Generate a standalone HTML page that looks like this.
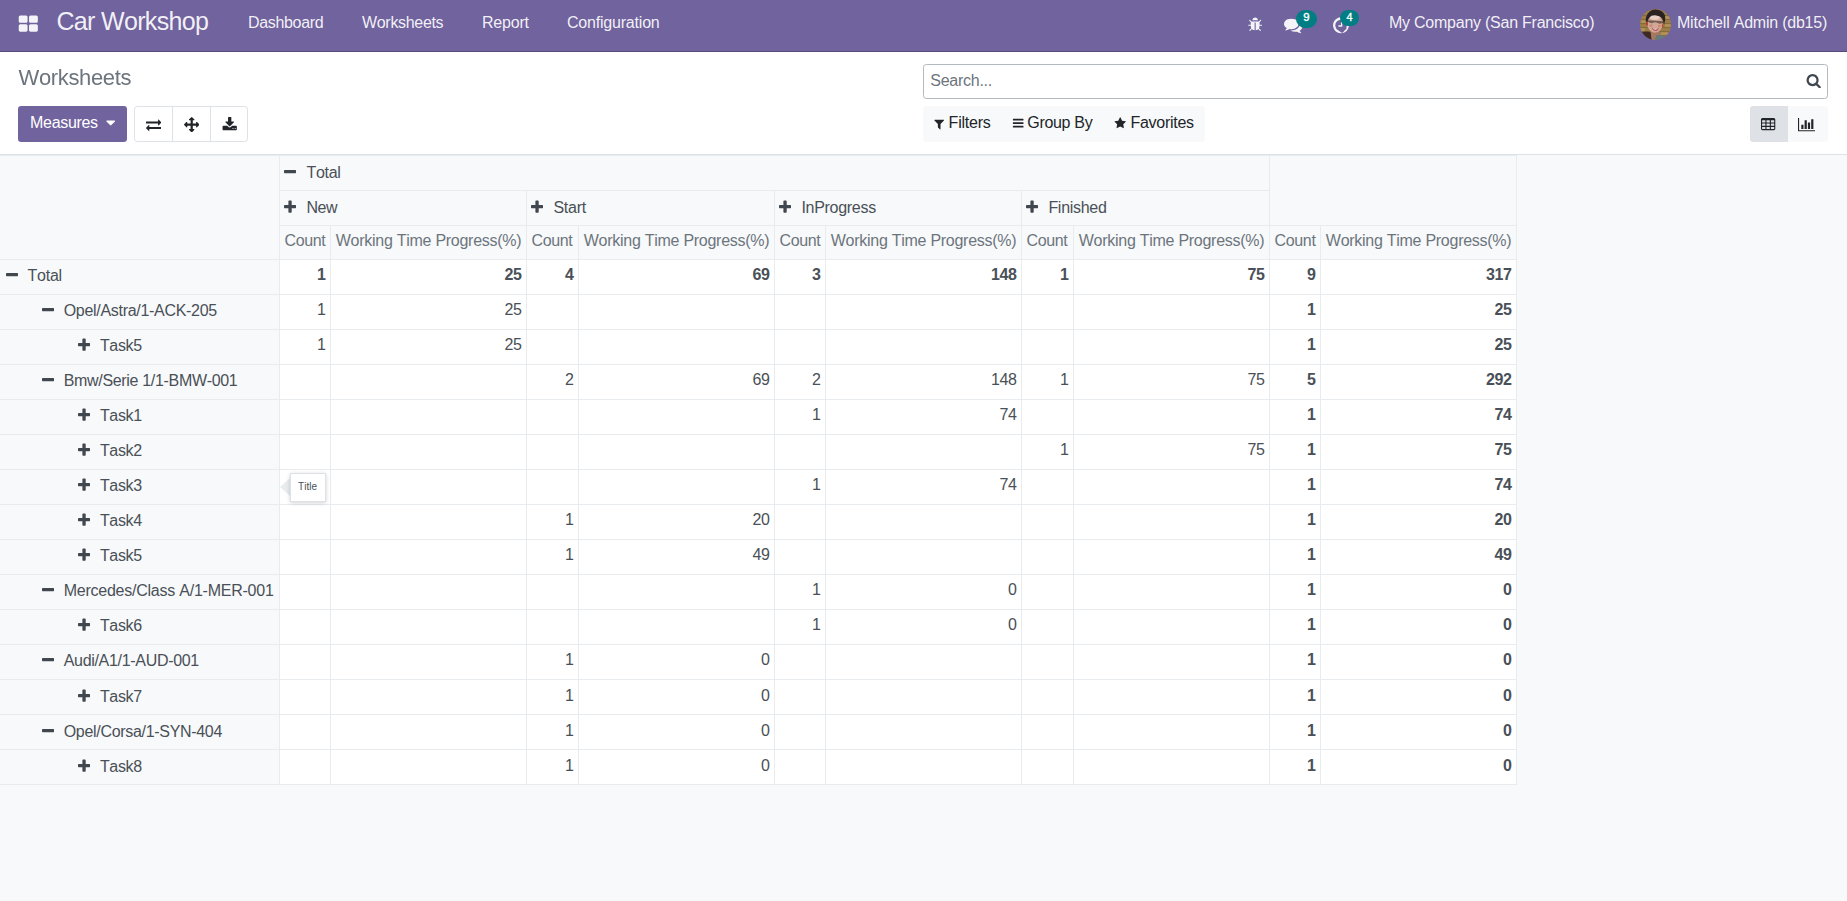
<!DOCTYPE html>
<html lang="en"><head><meta charset="utf-8"><title>Odoo - Worksheets</title>
<style>
html,body{margin:0;padding:0;}
body{font-kerning:none;width:1847px;height:901px;overflow:hidden;background:#f8f9fa;font-family:"Liberation Sans",sans-serif;font-size:15.4px;line-height:23.1px;color:#495057;position:relative;}
*{box-sizing:border-box;}
.tx{display:inline-block;vertical-align:top;white-space:nowrap;}
/* ---------- navbar ---------- */
.nav{position:absolute;left:0;top:0;width:1847px;height:52px;background:#71639e;border-bottom:1px solid #554a7b;color:#fff;}
.nav .t{position:absolute;white-space:nowrap;color:rgba(255,255,255,.92);font-size:15.4px;line-height:23.1px;top:11px;}
.nav .brand{position:absolute;left:56.4px;top:4px;font-size:23.76px;line-height:35.6px;color:rgba(255,255,255,.92);white-space:nowrap;}
.nav svg{position:absolute;}
.badge{position:absolute;background:#017e84;color:#fff;font-size:11.6px;line-height:1;font-weight:400;-webkit-text-stroke:0.35px #fff;border-radius:10px;text-align:center;}
/* ---------- control panel ---------- */
.cp{position:absolute;left:0;top:52px;width:1847px;height:103px;background:#fff;border-bottom:1px solid #dee2e6;}
.cp .title{position:absolute;left:18.6px;top:10px;font-size:21.1px;line-height:31.7px;color:#6c757d;white-space:nowrap;}
.cp svg{position:absolute;}
.btn-m{position:absolute;left:18px;top:54px;width:109px;height:36px;background:#71639e;border-radius:3.3px;color:#fff;font-size:15.4px;line-height:23.1px;padding:5.4px 0 0 12.1px;white-space:nowrap;}
.bg{position:absolute;left:134px;top:54px;width:114px;height:36px;border:1px solid #dee2e6;border-radius:3.3px;background:#fff;}
.bg i{position:absolute;top:0;width:1px;height:34px;background:#dee2e6;}
.search{position:absolute;left:923px;top:12px;width:905px;height:35px;border:1px solid #b4b9be;border-radius:3.3px;background:#fff;}
.search>span{position:absolute;left:6.3px;top:4.3px;color:#6c757d;font-size:15.4px;line-height:23.1px;}
.fg{position:absolute;left:923px;top:54px;width:282px;height:36px;background:#f8f9fa;border-radius:3.3px;}
.fg>span{position:absolute;top:5.4px;color:#212529;font-size:15.4px;line-height:23.1px;white-space:nowrap;}
.vs{position:absolute;left:1750px;top:54px;width:78px;height:36px;background:#f8f9fa;border-radius:3.3px;overflow:hidden;}
.vs .act{position:absolute;left:0;top:0;width:38px;height:36px;background:#dee2e6;}
/* ---------- pivot ---------- */
.content{position:absolute;left:0;top:155px;width:1847px;height:746px;background:#f8f9fa;}
table.pv{border-collapse:separate;border-spacing:0;table-layout:fixed;width:1517px;margin:0;border-top:1px solid #e9ecef;}
.pv col.cc{width:51.2px;}
.pv col.cw{width:196.2px;}
.pv th,.pv td{border-right:1px solid #e9ecef;border-bottom:1px solid #e9ecef;padding:3.2px 4.4px 0 4.4px;vertical-align:top;font-weight:400;text-align:left;white-space:nowrap;overflow:hidden;font-size:15.4px;line-height:23.1px;}
.pv tr{height:35.05px;}
.pv tr.h3{height:33.55px;}
.pv tr.h1{height:35px;}
.pv th{background:#f8f9fa;color:#495057;}
.pv th.ms{color:#6c757d;}
.pv td{background:#fff;text-align:right;color:#495057;padding-top:3.35px;}
.pv .pi{display:inline-block;vertical-align:top;margin:3px 9.9px 0 0;}
.pv th.rh .pi{margin-right:9.6px;}
.pv th.hd{padding-top:4.6px;}
.pv th.rh{padding-top:4.38px;padding-left:5.9px;}
.pv th.l1{padding-left:42px;}
.pv th.l2{padding-left:78.2px;}
/* ---------- tooltip ---------- */
.tip{position:absolute;left:280px;top:318px;}
.tip-arrow{position:absolute;left:0.4px;top:4.9px;width:0;height:0;border-top:9px solid transparent;border-bottom:9px solid transparent;border-right:10.3px solid #e9ecef;}
.tip-box{position:absolute;left:10px;top:0px;width:36px;height:28.6px;padding-right:1px;background:#fff;border:1px solid #dee2e6;box-shadow:0 1px 4px rgba(0,0,0,.18);font-size:10px;line-height:25.2px;text-align:center;color:#495057;}

</style></head>
<body>
<div class="nav">
<svg viewBox="0 0 1792 1792" width="20.60" height="20.60" style="left:17.5px;top:14.1px"><path fill="rgba(255,255,255,.92)" d="M832 1024v384q0 52-38 90t-90 38h-512q-52 0-90-38t-38-90v-384q0-52 38-90t90-38h512q52 0 90 38t38 90zM832 256v384q0 52-38 90t-90 38h-512q-52 0-90-38t-38-90v-384q0-52 38-90t90-38h512q52 0 90 38t38 90zM1728 1024v384q0 52-38 90t-90 38h-512q-52 0-90-38t-38-90v-384q0-52 38-90t90-38h512q52 0 90 38t38 90zM1728 256v384q0 52-38 90t-90 38h-512q-52 0-90-38t-38-90v-384q0-52 38-90t90-38h512q52 0 90 38t38 90z"/></svg>
<span class="brand"><span class="tx" style="font-size:25px;line-height:35.6px;letter-spacing:-0.660px;">Car Workshop</span></span>
<span class="t" style="left:248px"><span class="tx" style="font-size:16px;line-height:23.1px;letter-spacing:-0.326px;">Dashboard</span></span>
<span class="t" style="left:362px"><span class="tx" style="font-size:16px;line-height:23.1px;letter-spacing:-0.317px;">Worksheets</span></span>
<span class="t" style="left:482px"><span class="tx" style="font-size:16px;line-height:23.1px;letter-spacing:-0.200px;">Report</span></span>
<span class="t" style="left:567px"><span class="tx" style="font-size:16px;line-height:23.1px;letter-spacing:-0.201px;">Configuration</span></span>
<svg viewBox="0 0 1792 1792" width="15.40" height="15.40" style="left:1248.1px;top:17.0px"><path fill="rgba(255,255,255,.92)" d="M1632 960q0 26-19 45t-45 19h-224q0 171-67 290l208 209q19 19 19 45t-19 45q-18 19-45 19t-45-19l-198-197q-5 5-15 13t-42 28.500-65 36.500-82 29-97 13v-896h-128v896q-51 0-101.500-13.500t-87-33-66-39-43.500-32.500l-15-14-183 207q-20 21-48 21-24 0-43-16-19-18-20.500-44.500t15.500-46.500l202-227q-58-114-58-274h-224q-26 0-45-19t-19-45 19-45 45-19h224v-294l-173-173q-19-19-19-45t19-45 45-19 45 19l173 173h844l173-173q19-19 45-19t45 19 19 45-19 45l-173 173v294h224q26 0 45 19t19 45zM1152 384h-640q0-133 93.500-226.500t226.500-93.500 226.500 93.500 93.500 226.500z"/></svg>
<svg viewBox="0 0 1792 1792" width="18.48" height="18.48" style="left:1283.6px;top:15.8px"><path fill="rgba(255,255,255,.92)" d="M1408 768q0 139-94 257t-256.500 186.500-353.500 68.500q-86 0-176-16-124 88-278 128-36 9-86 16h-3q-11 0-20.500-8t-11.500-21q-1-3-1-6.500t0.500-6.500 2-6l2.500-5t3.500-5.500 4-5 4.500-5 4-4.500q5-6 23-25t26-29.500 22.500-29 25-38.500 20.500-44q-124-72-195-177t-71-224q0-139 94-257t256.500-186.500 353.500-68.500 353.500 68.500 256.500 186.500 94 257zM1792 1024q0 120-71 224.500t-195 176.500q10 24 20.500 44t25 38.500 22.500 29 26 29.500 23 25q1 1 4 4.500t4.500 5 4 5 3.500 5.500l2.500 5t2 6 0.500 6.500-1 6.500q-3 14-13 22t-22 7q-50-7-86-16-154-40-278-128-90 16-176 16-271 0-472-132 58 4 88 4 161 0 309-45t264-129q125-92 192-212t67-254q0-77-23-152 129 71 204 178t75 230z"/></svg>
<span class="badge" style="left:1296px;top:9.7px;width:21px;height:18.3px;padding-top:2.5px;font-size:11.4px">9</span>
<svg viewBox="0 0 1536 1792" width="15.94" height="18.60" style="left:1332.8px;top:16.0px"><path fill="rgba(255,255,255,.92)" d="M896 544v448q0 14-9 23t-23 9h-320q-14 0-23-9t-9-23v-64q0-14 9-23t23-9h224v-352q0-14 9-23t23-9h64q14 0 23 9t9 23zM1312 896q0-148-73-273t-198-198-273-73-273 73-198 198-73 273 73 273 198 198 273 198 273-73 198-198 73-273zM1536 896q0 209-103 385.500t-279.500 279.500-385.500 103-385.500-103-279.500-279.500-103-385.500 103-385.500 279.500-279.500 385.500-103 385.500 103 279.500 279.500 103 385.500z"/></svg>
<span class="badge" style="left:1340px;top:9.7px;width:19.2px;height:16.5px;padding-top:2.8px;font-size:10.8px">4</span>
<span class="t" style="left:1389px"><span class="tx" style="font-size:16px;line-height:23.1px;letter-spacing:-0.244px;">My Company (San Francisco)</span></span>
<svg viewBox="0 0 31 31" width="31.1" height="31.1" style="left:1639.9px;top:8.9px">
<defs><clipPath id="av"><circle cx="15.5" cy="15.5" r="15.5"/></clipPath><filter id="avb" x="-10%" y="-10%" width="120%" height="120%"><feGaussianBlur stdDeviation="0.55"/></filter></defs>
<g clip-path="url(#av)"><g filter="url(#avb)">
<rect x="-2" y="-2" width="35" height="35" fill="#9c7c47"/>
<g stroke="#7a6034" stroke-width="0.9" opacity=".75"><path d="M-1 6.5H32M-1 10.5H32M-1 14.5H32M-1 18.5H32M-1 22.5H32M-1 26.5H32"/></g>
<g fill="#b8985a" opacity=".8"><rect x="1" y="11.2" width="5" height="2.6"/><rect x="24.5" y="7.2" width="5" height="2.6"/><rect x="25" y="15.2" width="5.5" height="2.6"/><rect x="21" y="23.2" width="7" height="2.6"/><rect x="0" y="19.2" width="5" height="2.6"/></g>
<path d="M-1 32 L1.5 23.5 Q8 21 13 24.5 L15 32 Z" fill="#3d2a20"/>
<path d="M10.5 22 L11.5 31 L21 31 L19 21 Z" fill="#a8775f"/>
<path d="M14.5 31 L16.5 25.8 Q22 25 26.5 28.5 L27 33 L14 33 Z" fill="#66797b"/>
<ellipse cx="14.9" cy="14.4" rx="7.7" ry="9.3" fill="#d3a795"/>
<ellipse cx="6.9" cy="14.6" rx="1.1" ry="1.9" fill="#b5422f"/>
<ellipse cx="22.6" cy="16.6" rx="0.9" ry="1.6" fill="#b9513c"/>
<ellipse cx="14.8" cy="8" rx="5" ry="2.8" fill="#e9d6cf" opacity=".85"/>
<ellipse cx="11" cy="16.5" rx="1.6" ry="1.5" fill="#c9604f" opacity=".4"/>
<ellipse cx="19.3" cy="17" rx="1.5" ry="1.4" fill="#c9604f" opacity=".4"/>
<path d="M5.8 12.5 Q5.2 4 12.5 0.8 Q22 -0.8 25 6.5 Q25.8 11.5 24 15.5 L22.8 11 Q21 6.8 16 6.4 Q11 6 9.2 8.6 Q8 10.4 7.4 13.2 Z" fill="#2a2320"/>
<path d="M7.4 11.3 L23.6 12.3 L23.6 14 L19.5 14.6 L16.4 13.4 L14.6 13.3 L11.5 14.2 L7.4 12.8 Z" fill="#4b3a34" opacity=".7"/>
<path d="M11.6 18.6 Q15.3 19.6 18.8 18.9 Q18 22 15.2 22 Q12.6 21.7 11.6 18.6Z" fill="#b04f58"/>
<path d="M12.6 19.1 Q15.3 19.9 17.9 19.3 Q17.4 20.6 15.2 20.6 Q13.4 20.4 12.6 19.1Z" fill="#f4ece8"/>
</g></g></svg>
<span class="t" style="left:1677px"><span class="tx" style="font-size:16px;line-height:23.1px;letter-spacing:-0.221px;">Mitchell Admin (db15)</span></span>
</div>
<div class="cp">
<span class="title"><span class="tx" style="font-size:22px;line-height:31.7px;letter-spacing:-0.370px;transform:scaleY(1.04);transform-origin:0 23.47px;">Worksheets</span></span>
<div class="btn-m"><span class="tx" style="font-size:16px;line-height:23.1px;letter-spacing:-0.329px;">Measures</span><svg viewBox="0 0 1792 1792" width="15.40" height="15.40" style="left:85.3px;top:9.4px"><path fill="#fff" d="M1408 704q0 26-19 45l-448 448q-19 19-45 19t-45-19l-448-448q-19-19-19-45t19-45 45-19h896q26 0 45 19t19 45z"/></svg></div>
<div class="bg"><i style="left:37.3px"></i><i style="left:75.1px"></i>
<svg viewBox="0 0 1792 1792" width="15.40" height="15.40" style="left:10.8px;top:9.6px"><path fill="#212529" d="M1792 1184v192q0 13-9.500 22.500t-22.500 9.500h-1376v192q0 13-9.500 22.500t-22.500 9.500q-12 0-24-10l-319-320q-9-9-9-22 0-14 9-23l320-320q9-9 23-9 13 0 22.500 9.500t9.500 22.500v192h1376q13 0 22.500 9.500t9.500 22.500zM1792 640q0 14-9 23l-320 320q-9 9-23 9-13 0-22.500-9.500t-9.500-22.500v-192h-1376q-13 0-22.500-9.500t-9.500-22.500v-192q0-13 9.500-22.500t22.500-9.500h1376v-192q0-14 9-23t23-9q12 0 24 10l319 319q9 9 9 23z"/></svg>
<svg viewBox="0 0 1792 1792" width="15.40" height="15.40" style="left:48.6px;top:9.8px"><path fill="#212529" d="M1792 896q0 26-19 45l-256 256q-19 19-45 19t-45-19-19-45v-128h-384v384h128q26 0 45 19t19 45-19 45l-256 256q-19 19-45 19t-45-19l-256-256q-19-19-19-45t19-45 45-19h128v-384h-384v128q0 26-19 45t-45 19-45-19l-256-256q-19-19-19-45t19-45l256-256q19-19 45-19t45 19 19 45v128h384v-384h-128q-26 0-45-19t-19-45 19-45l256-256q19-19 45-19t45 19l256 256q19 19 19 45t-19 45-45 19h-128v384h384v-128q0-26 19-45t45-19 45 19l256 256q19 19 19 45z"/></svg>
<svg viewBox="0 0 1792 1792" width="15.40" height="15.40" style="left:86.5px;top:9.7px"><path fill="#212529" d="M1344 1344q0-26-19-45t-45-19-45 19-19 45 19 45 45 19 45-19 19-45zM1600 1344q0-26-19-45t-45-19-45 19-19 45 19 45 45 19 45-19 19-45zM1728 1120v320q0 40-28 68t-68 28h-1472q-40 0-68-28t-28-68v-320q0-40 28-68t68-28h465l135 136q58 56 136 56t136-56l136-136h464q40 0 68 28t28 68zM1403 551q17 41-14 70l-448 448q-18 19-45 19t-45-19l-448-448q-31-29-14-70 17-39 59-39h256v-448q0-26 19-45t45-19h256q26 0 45 19t19 45v448h256q42 0 59 39z"/></svg>
</div>
<div class="search"><span><span class="tx" style="font-size:16px;line-height:23.1px;letter-spacing:-0.267px;">Search...</span></span><svg viewBox="0 0 1792 1792" width="15.40" height="15.40" style="left:881.5px;top:7.6px"><path fill="#41474e" d="M1216 832q0-185-131.500-316.500t-316.500-131.500-316.500 131.500-131.500 316.500 131.500 316.500 316.500 131.500 316.500-131.500 131.500-316.500zM1728 1664q0 52-38 90t-90 38q-54 0-90-38l-343-342q-179 124-399 124-143 0-273.500-55.500t-225-150-150-225-55.500-273.500 55.500-273.500 150-225 225-150 273.500-55.500 273.500 55.500 225 150 150 225 55.500 273.500q0 220-124 399l343 343q37 37 37 90z"/></svg></div>
<div class="fg">
<svg viewBox="0 0 1792 1792" width="12.40" height="12.40" style="left:10.4px;top:11.5px"><path fill="#212529" d="M1595 295q17 41-14 70l-493 493v742q0 42-39 59-13 5-25 5-27 0-45-19l-256-256q-19-19-19-45v-486l-493-493q-31-29-14-70 17-39 59-39h1280q42 0 59 39z"/></svg><span style="left:25.6px"><span class="tx" style="font-size:16px;line-height:23.1px;letter-spacing:-0.233px;">Filters</span></span>
<svg viewBox="0 0 1792 1792" width="12.40" height="12.40" style="left:88.8px;top:11.1px"><path fill="#212529" d="M1664 1344v128q0 26-19 45t-45 19h-1408q-26 0-45-19t-19-45v-128q0-26 19-45t45-19h1408q26 0 45 19t19 45zM1664 832v128q0 26-19 45t-45 19h-1408q-26 0-45-19t-19-45v-128q0-26 19-45t45-19h1408q26 0 45 19t19 45zM1664 320v128q0 26-19 45t-45 19h-1408q-26 0-45-19t-19-45v-128q0-26 19-45t45-19h1408q26 0 45 19t19 45z"/></svg><span style="left:104.3px"><span class="tx" style="font-size:16px;line-height:23.1px;letter-spacing:-0.317px;">Group By</span></span>
<svg viewBox="0 0 1792 1792" width="12.40" height="12.40" style="left:191.3px;top:11.0px"><path fill="#212529" d="M1728 647q0 22-26 48l-363 354 86 500q1 7 1 20 0 21-10.500 35.500t-30.500 14.500q-19 0-40-12l-449-236-449 236q-22 12-40 12-21 0-31.500-14.500t-10.500-35.500q0-6 2-20l86-500-364-354q-25-27-25-48 0-37 56-46l502-73 225-455q19-41 49-41t49 41l225 455 502 73q56 9 56 46z"/></svg><span style="left:207.5px"><span class="tx" style="font-size:16px;line-height:23.1px;letter-spacing:-0.274px;">Favorites</span></span>
</div>
<div class="vs"><div class="act"></div>
<svg viewBox="0 0 1792 1792" width="15.40" height="15.40" style="left:11.2px;top:10.7px"><path fill="#212529" d="M512 1376v-192q0-14-9-23t-23-9h-320q-14 0-23 9t-9 23v192q0 14 9 23t23 9h320q14 0 23-9t9-23zM512 992v-192q0-14-9-23t-23-9h-320q-14 0-23 9t-9 23v192q0 14 9 23t23 9h320q14 0 23-9t9-23zM1024 1376v-192q0-14-9-23t-23-9h-320q-14 0-23 9t-9 23v192q0 14 9 23t23 9h320q14 0 23-9t9-23zM512 608v-192q0-14-9-23t-23-9h-320q-14 0-23 9t-9 23v192q0 14 9 23t23 9h320q14 0 23-9t9-23zM1024 992v-192q0-14-9-23t-23-9h-320q-14 0-23 9t-9 23v192q0 14 9 23t23 9h320q14 0 23-9t9-23zM1536 1376v-192q0-14-9-23t-23-9h-320q-14 0-23 9t-9 23v192q0 14 9 23t23 9h320q14 0 23-9t9-23zM1024 608v-192q0-14-9-23t-23-9h-320q-14 0-23 9t-9 23v192q0 14 9 23t23 9h320q14 0 23-9t9-23zM1536 992v-192q0-14-9-23t-23-9h-320q-14 0-23 9t-9 23v192q0 14 9 23t23 9h320q14 0 23-9t9-23zM1536 608v-192q0-14-9-23t-23-9h-320q-14 0-23 9t-9 23v192q0 14 9 23t23 9h320q14 0 23-9t9-23zM1664 288v1088q0 66-47 113t-113 47h-1344q-66 0-113-47t-47-113v-1088q0-66 47-113t113-47h1344q66 0 113 47t47 113z"/></svg>
<svg viewBox="0 0 2048 1792" width="17.60" height="15.40" style="left:47.6px;top:10.8px"><path fill="#212529" d="M640 896v512h-256v-512h256zM1024 384v1024h-256v-1024h256zM2048 1536v128h-2048v-1536h128v1408h1920zM1408 640v768h-256v-768h256zM1792 256v1152h-256v-1152h256z"/></svg>
</div>
</div>
<div class="content">
<table class="pv"><colgroup><col style="width:280px"><col style="width:51px"><col style="width:196px"><col style="width:52px"><col style="width:196px"><col style="width:51px"><col style="width:196px"><col style="width:52px"><col style="width:196px"><col style="width:51px"><col style="width:196px"></colgroup><thead>
<tr class="h1"><th rowspan="3" class="corner"></th><th colspan="8" class="hd"><svg class="pi" viewBox="192 -58 1408 1792" width="12.1" height="15.4"><path fill="#41474e" d="M1600 736v192q0 40-28 68t-68 28h-1216q-40 0-68-28t-28-68v-192q0-40 28-68t68-28h1216q40 0 68 28t28 68z"/></svg><span class="tx" style="font-size:16px;line-height:23.1px;letter-spacing:-0.267px;">Total</span></th><th colspan="2" rowspan="2" class="hd"></th></tr>
<tr class="h2"><th colspan="2" class="hd"><svg class="pi" viewBox="192 -58 1408 1792" width="12.1" height="15.4"><path fill="#41474e" d="M1600 736v192q0 40-28 68t-68 28h-416v416q0 40-28 68t-68 28h-192q-40 0-68-28t-28-68v-416h-416q-40 0-68-28t-28-68v-192q0-40 28-68t68-28h416v-416q0-40 28-68t68-28h192q40 0 68 28t28 68v416h416q40 0 68 28t28 68z"/></svg><span class="tx" style="font-size:16px;line-height:23.1px;letter-spacing:-0.400px;">New</span></th><th colspan="2" class="hd"><svg class="pi" viewBox="192 -58 1408 1792" width="12.1" height="15.4"><path fill="#41474e" d="M1600 736v192q0 40-28 68t-68 28h-416v416q0 40-28 68t-68 28h-192q-40 0-68-28t-28-68v-416h-416q-40 0-68-28t-28-68v-192q0-40 28-68t68-28h416v-416q0-40 28-68t68-28h192q40 0 68 28t28 68v416h416q40 0 68 28t28 68z"/></svg><span class="tx" style="font-size:16px;line-height:23.1px;letter-spacing:-0.253px;">Start</span></th><th colspan="2" class="hd"><svg class="pi" viewBox="192 -58 1408 1792" width="12.1" height="15.4"><path fill="#41474e" d="M1600 736v192q0 40-28 68t-68 28h-416v416q0 40-28 68t-68 28h-192q-40 0-68-28t-28-68v-416h-416q-40 0-68-28t-28-68v-192q0-40 28-68t68-28h416v-416q0-40 28-68t68-28h192q40 0 68 28t28 68v416h416q40 0 68 28t28 68z"/></svg><span class="tx" style="font-size:16px;line-height:23.1px;letter-spacing:-0.290px;">InProgress</span></th><th colspan="2" class="hd"><svg class="pi" viewBox="192 -58 1408 1792" width="12.1" height="15.4"><path fill="#41474e" d="M1600 736v192q0 40-28 68t-68 28h-416v416q0 40-28 68t-68 28h-192q-40 0-68-28t-28-68v-416h-416q-40 0-68-28t-28-68v-192q0-40 28-68t68-28h416v-416q0-40 28-68t68-28h192q40 0 68 28t28 68v416h416q40 0 68 28t28 68z"/></svg><span class="tx" style="font-size:16px;line-height:23.1px;letter-spacing:-0.283px;">Finished</span></th></tr>
<tr class="h3"><th class="ms"><span class="tx" style="font-size:16px;line-height:23.1px;letter-spacing:-0.320px;">Count</span></th><th class="ms"><span class="tx" style="font-size:16px;line-height:23.1px;letter-spacing:-0.270px;margin-left:0.4px;">Working Time Progress(%)</span></th><th class="ms"><span class="tx" style="font-size:16px;line-height:23.1px;letter-spacing:-0.320px;">Count</span></th><th class="ms"><span class="tx" style="font-size:16px;line-height:23.1px;letter-spacing:-0.270px;margin-left:0.4px;">Working Time Progress(%)</span></th><th class="ms"><span class="tx" style="font-size:16px;line-height:23.1px;letter-spacing:-0.320px;">Count</span></th><th class="ms"><span class="tx" style="font-size:16px;line-height:23.1px;letter-spacing:-0.270px;margin-left:0.4px;">Working Time Progress(%)</span></th><th class="ms"><span class="tx" style="font-size:16px;line-height:23.1px;letter-spacing:-0.320px;">Count</span></th><th class="ms"><span class="tx" style="font-size:16px;line-height:23.1px;letter-spacing:-0.270px;margin-left:0.4px;">Working Time Progress(%)</span></th><th class="ms"><span class="tx" style="font-size:16px;line-height:23.1px;letter-spacing:-0.320px;">Count</span></th><th class="ms"><span class="tx" style="font-size:16px;line-height:23.1px;letter-spacing:-0.270px;margin-left:0.4px;">Working Time Progress(%)</span></th></tr></thead><tbody>
<tr class="r0"><th class="rh l0"><svg class="pi" viewBox="192 -58 1408 1792" width="12.1" height="15.4"><path fill="#41474e" d="M1600 736v192q0 40-28 68t-68 28h-1216q-40 0-68-28t-28-68v-192q0-40 28-68t68-28h1216q40 0 68 28t28 68z"/></svg><span class="tx" style="font-size:16px;line-height:23.1px;letter-spacing:-0.267px;">Total</span></th><td class="v"><span class="tx" style="font-size:16px;line-height:23.1px;letter-spacing:-0.334px;font-weight:700;">1</span></td><td class="v"><span class="tx" style="font-size:16px;line-height:23.1px;letter-spacing:-0.334px;font-weight:700;">25</span></td><td class="v"><span class="tx" style="font-size:16px;line-height:23.1px;letter-spacing:-0.334px;font-weight:700;">4</span></td><td class="v"><span class="tx" style="font-size:16px;line-height:23.1px;letter-spacing:-0.334px;font-weight:700;">69</span></td><td class="v"><span class="tx" style="font-size:16px;line-height:23.1px;letter-spacing:-0.334px;font-weight:700;">3</span></td><td class="v"><span class="tx" style="font-size:16px;line-height:23.1px;letter-spacing:-0.334px;font-weight:700;">148</span></td><td class="v"><span class="tx" style="font-size:16px;line-height:23.1px;letter-spacing:-0.334px;font-weight:700;">1</span></td><td class="v"><span class="tx" style="font-size:16px;line-height:23.1px;letter-spacing:-0.334px;font-weight:700;">75</span></td><td class="v"><span class="tx" style="font-size:16px;line-height:23.1px;letter-spacing:-0.334px;font-weight:700;">9</span></td><td class="v"><span class="tx" style="font-size:16px;line-height:23.1px;letter-spacing:-0.334px;font-weight:700;">317</span></td></tr>
<tr class="r1"><th class="rh l1"><svg class="pi" viewBox="192 -58 1408 1792" width="12.1" height="15.4"><path fill="#41474e" d="M1600 736v192q0 40-28 68t-68 28h-1216q-40 0-68-28t-28-68v-192q0-40 28-68t68-28h1216q40 0 68 28t28 68z"/></svg><span class="tx" style="font-size:16px;line-height:23.1px;letter-spacing:-0.298px;">Opel/Astra/1-ACK-205</span></th><td class="v"><span class="tx" style="font-size:16px;line-height:23.1px;letter-spacing:-0.334px;">1</span></td><td class="v"><span class="tx" style="font-size:16px;line-height:23.1px;letter-spacing:-0.334px;">25</span></td><td class="v"></td><td class="v"></td><td class="v"></td><td class="v"></td><td class="v"></td><td class="v"></td><td class="v"><span class="tx" style="font-size:16px;line-height:23.1px;letter-spacing:-0.334px;font-weight:700;">1</span></td><td class="v"><span class="tx" style="font-size:16px;line-height:23.1px;letter-spacing:-0.334px;font-weight:700;">25</span></td></tr>
<tr class="r2"><th class="rh l2"><svg class="pi" viewBox="192 -58 1408 1792" width="12.1" height="15.4"><path fill="#41474e" d="M1600 736v192q0 40-28 68t-68 28h-416v416q0 40-28 68t-68 28h-192q-40 0-68-28t-28-68v-416h-416q-40 0-68-28t-28-68v-192q0-40 28-68t68-28h416v-416q0-40 28-68t68-28h192q40 0 68 28t28 68v416h416q40 0 68 28t28 68z"/></svg><span class="tx" style="font-size:16px;line-height:23.1px;letter-spacing:-0.327px;">Task5</span></th><td class="v"><span class="tx" style="font-size:16px;line-height:23.1px;letter-spacing:-0.334px;">1</span></td><td class="v"><span class="tx" style="font-size:16px;line-height:23.1px;letter-spacing:-0.334px;">25</span></td><td class="v"></td><td class="v"></td><td class="v"></td><td class="v"></td><td class="v"></td><td class="v"></td><td class="v"><span class="tx" style="font-size:16px;line-height:23.1px;letter-spacing:-0.334px;font-weight:700;">1</span></td><td class="v"><span class="tx" style="font-size:16px;line-height:23.1px;letter-spacing:-0.334px;font-weight:700;">25</span></td></tr>
<tr class="r3"><th class="rh l1"><svg class="pi" viewBox="192 -58 1408 1792" width="12.1" height="15.4"><path fill="#41474e" d="M1600 736v192q0 40-28 68t-68 28h-1216q-40 0-68-28t-28-68v-192q0-40 28-68t68-28h1216q40 0 68 28t28 68z"/></svg><span class="tx" style="font-size:16px;line-height:23.1px;letter-spacing:-0.322px;">Bmw/Serie 1/1-BMW-001</span></th><td class="v"></td><td class="v"></td><td class="v"><span class="tx" style="font-size:16px;line-height:23.1px;letter-spacing:-0.334px;">2</span></td><td class="v"><span class="tx" style="font-size:16px;line-height:23.1px;letter-spacing:-0.334px;">69</span></td><td class="v"><span class="tx" style="font-size:16px;line-height:23.1px;letter-spacing:-0.334px;">2</span></td><td class="v"><span class="tx" style="font-size:16px;line-height:23.1px;letter-spacing:-0.334px;">148</span></td><td class="v"><span class="tx" style="font-size:16px;line-height:23.1px;letter-spacing:-0.334px;">1</span></td><td class="v"><span class="tx" style="font-size:16px;line-height:23.1px;letter-spacing:-0.334px;">75</span></td><td class="v"><span class="tx" style="font-size:16px;line-height:23.1px;letter-spacing:-0.334px;font-weight:700;">5</span></td><td class="v"><span class="tx" style="font-size:16px;line-height:23.1px;letter-spacing:-0.334px;font-weight:700;">292</span></td></tr>
<tr class="r4"><th class="rh l2"><svg class="pi" viewBox="192 -58 1408 1792" width="12.1" height="15.4"><path fill="#41474e" d="M1600 736v192q0 40-28 68t-68 28h-416v416q0 40-28 68t-68 28h-192q-40 0-68-28t-28-68v-416h-416q-40 0-68-28t-28-68v-192q0-40 28-68t68-28h416v-416q0-40 28-68t68-28h192q40 0 68 28t28 68v416h416q40 0 68 28t28 68z"/></svg><span class="tx" style="font-size:16px;line-height:23.1px;letter-spacing:-0.327px;">Task1</span></th><td class="v"></td><td class="v"></td><td class="v"></td><td class="v"></td><td class="v"><span class="tx" style="font-size:16px;line-height:23.1px;letter-spacing:-0.334px;">1</span></td><td class="v"><span class="tx" style="font-size:16px;line-height:23.1px;letter-spacing:-0.334px;">74</span></td><td class="v"></td><td class="v"></td><td class="v"><span class="tx" style="font-size:16px;line-height:23.1px;letter-spacing:-0.334px;font-weight:700;">1</span></td><td class="v"><span class="tx" style="font-size:16px;line-height:23.1px;letter-spacing:-0.334px;font-weight:700;">74</span></td></tr>
<tr class="r5"><th class="rh l2"><svg class="pi" viewBox="192 -58 1408 1792" width="12.1" height="15.4"><path fill="#41474e" d="M1600 736v192q0 40-28 68t-68 28h-416v416q0 40-28 68t-68 28h-192q-40 0-68-28t-28-68v-416h-416q-40 0-68-28t-28-68v-192q0-40 28-68t68-28h416v-416q0-40 28-68t68-28h192q40 0 68 28t28 68v416h416q40 0 68 28t28 68z"/></svg><span class="tx" style="font-size:16px;line-height:23.1px;letter-spacing:-0.327px;">Task2</span></th><td class="v"></td><td class="v"></td><td class="v"></td><td class="v"></td><td class="v"></td><td class="v"></td><td class="v"><span class="tx" style="font-size:16px;line-height:23.1px;letter-spacing:-0.334px;">1</span></td><td class="v"><span class="tx" style="font-size:16px;line-height:23.1px;letter-spacing:-0.334px;">75</span></td><td class="v"><span class="tx" style="font-size:16px;line-height:23.1px;letter-spacing:-0.334px;font-weight:700;">1</span></td><td class="v"><span class="tx" style="font-size:16px;line-height:23.1px;letter-spacing:-0.334px;font-weight:700;">75</span></td></tr>
<tr class="r6"><th class="rh l2"><svg class="pi" viewBox="192 -58 1408 1792" width="12.1" height="15.4"><path fill="#41474e" d="M1600 736v192q0 40-28 68t-68 28h-416v416q0 40-28 68t-68 28h-192q-40 0-68-28t-28-68v-416h-416q-40 0-68-28t-28-68v-192q0-40 28-68t68-28h416v-416q0-40 28-68t68-28h192q40 0 68 28t28 68v416h416q40 0 68 28t28 68z"/></svg><span class="tx" style="font-size:16px;line-height:23.1px;letter-spacing:-0.327px;">Task3</span></th><td class="v"></td><td class="v"></td><td class="v"></td><td class="v"></td><td class="v"><span class="tx" style="font-size:16px;line-height:23.1px;letter-spacing:-0.334px;">1</span></td><td class="v"><span class="tx" style="font-size:16px;line-height:23.1px;letter-spacing:-0.334px;">74</span></td><td class="v"></td><td class="v"></td><td class="v"><span class="tx" style="font-size:16px;line-height:23.1px;letter-spacing:-0.334px;font-weight:700;">1</span></td><td class="v"><span class="tx" style="font-size:16px;line-height:23.1px;letter-spacing:-0.334px;font-weight:700;">74</span></td></tr>
<tr class="r7"><th class="rh l2"><svg class="pi" viewBox="192 -58 1408 1792" width="12.1" height="15.4"><path fill="#41474e" d="M1600 736v192q0 40-28 68t-68 28h-416v416q0 40-28 68t-68 28h-192q-40 0-68-28t-28-68v-416h-416q-40 0-68-28t-28-68v-192q0-40 28-68t68-28h416v-416q0-40 28-68t68-28h192q40 0 68 28t28 68v416h416q40 0 68 28t28 68z"/></svg><span class="tx" style="font-size:16px;line-height:23.1px;letter-spacing:-0.327px;">Task4</span></th><td class="v"></td><td class="v"></td><td class="v"><span class="tx" style="font-size:16px;line-height:23.1px;letter-spacing:-0.334px;">1</span></td><td class="v"><span class="tx" style="font-size:16px;line-height:23.1px;letter-spacing:-0.334px;">20</span></td><td class="v"></td><td class="v"></td><td class="v"></td><td class="v"></td><td class="v"><span class="tx" style="font-size:16px;line-height:23.1px;letter-spacing:-0.334px;font-weight:700;">1</span></td><td class="v"><span class="tx" style="font-size:16px;line-height:23.1px;letter-spacing:-0.334px;font-weight:700;">20</span></td></tr>
<tr class="r8"><th class="rh l2"><svg class="pi" viewBox="192 -58 1408 1792" width="12.1" height="15.4"><path fill="#41474e" d="M1600 736v192q0 40-28 68t-68 28h-416v416q0 40-28 68t-68 28h-192q-40 0-68-28t-28-68v-416h-416q-40 0-68-28t-28-68v-192q0-40 28-68t68-28h416v-416q0-40 28-68t68-28h192q40 0 68 28t28 68v416h416q40 0 68 28t28 68z"/></svg><span class="tx" style="font-size:16px;line-height:23.1px;letter-spacing:-0.327px;">Task5</span></th><td class="v"></td><td class="v"></td><td class="v"><span class="tx" style="font-size:16px;line-height:23.1px;letter-spacing:-0.334px;">1</span></td><td class="v"><span class="tx" style="font-size:16px;line-height:23.1px;letter-spacing:-0.334px;">49</span></td><td class="v"></td><td class="v"></td><td class="v"></td><td class="v"></td><td class="v"><span class="tx" style="font-size:16px;line-height:23.1px;letter-spacing:-0.334px;font-weight:700;">1</span></td><td class="v"><span class="tx" style="font-size:16px;line-height:23.1px;letter-spacing:-0.334px;font-weight:700;">49</span></td></tr>
<tr class="r9"><th class="rh l1"><svg class="pi" viewBox="192 -58 1408 1792" width="12.1" height="15.4"><path fill="#41474e" d="M1600 736v192q0 40-28 68t-68 28h-1216q-40 0-68-28t-28-68v-192q0-40 28-68t68-28h1216q40 0 68 28t28 68z"/></svg><span class="tx" style="font-size:16px;line-height:23.1px;letter-spacing:-0.239px;">Mercedes/Class A/1-MER-001</span></th><td class="v"></td><td class="v"></td><td class="v"></td><td class="v"></td><td class="v"><span class="tx" style="font-size:16px;line-height:23.1px;letter-spacing:-0.334px;">1</span></td><td class="v"><span class="tx" style="font-size:16px;line-height:23.1px;letter-spacing:-0.334px;">0</span></td><td class="v"></td><td class="v"></td><td class="v"><span class="tx" style="font-size:16px;line-height:23.1px;letter-spacing:-0.334px;font-weight:700;">1</span></td><td class="v"><span class="tx" style="font-size:16px;line-height:23.1px;letter-spacing:-0.334px;font-weight:700;">0</span></td></tr>
<tr class="r10"><th class="rh l2"><svg class="pi" viewBox="192 -58 1408 1792" width="12.1" height="15.4"><path fill="#41474e" d="M1600 736v192q0 40-28 68t-68 28h-416v416q0 40-28 68t-68 28h-192q-40 0-68-28t-28-68v-416h-416q-40 0-68-28t-28-68v-192q0-40 28-68t68-28h416v-416q0-40 28-68t68-28h192q40 0 68 28t28 68v416h416q40 0 68 28t28 68z"/></svg><span class="tx" style="font-size:16px;line-height:23.1px;letter-spacing:-0.327px;">Task6</span></th><td class="v"></td><td class="v"></td><td class="v"></td><td class="v"></td><td class="v"><span class="tx" style="font-size:16px;line-height:23.1px;letter-spacing:-0.334px;">1</span></td><td class="v"><span class="tx" style="font-size:16px;line-height:23.1px;letter-spacing:-0.334px;">0</span></td><td class="v"></td><td class="v"></td><td class="v"><span class="tx" style="font-size:16px;line-height:23.1px;letter-spacing:-0.334px;font-weight:700;">1</span></td><td class="v"><span class="tx" style="font-size:16px;line-height:23.1px;letter-spacing:-0.334px;font-weight:700;">0</span></td></tr>
<tr class="r11"><th class="rh l1"><svg class="pi" viewBox="192 -58 1408 1792" width="12.1" height="15.4"><path fill="#41474e" d="M1600 736v192q0 40-28 68t-68 28h-1216q-40 0-68-28t-28-68v-192q0-40 28-68t68-28h1216q40 0 68 28t28 68z"/></svg><span class="tx" style="font-size:16px;line-height:23.1px;letter-spacing:-0.310px;">Audi/A1/1-AUD-001</span></th><td class="v"></td><td class="v"></td><td class="v"><span class="tx" style="font-size:16px;line-height:23.1px;letter-spacing:-0.334px;">1</span></td><td class="v"><span class="tx" style="font-size:16px;line-height:23.1px;letter-spacing:-0.334px;">0</span></td><td class="v"></td><td class="v"></td><td class="v"></td><td class="v"></td><td class="v"><span class="tx" style="font-size:16px;line-height:23.1px;letter-spacing:-0.334px;font-weight:700;">1</span></td><td class="v"><span class="tx" style="font-size:16px;line-height:23.1px;letter-spacing:-0.334px;font-weight:700;">0</span></td></tr>
<tr class="r12"><th class="rh l2"><svg class="pi" viewBox="192 -58 1408 1792" width="12.1" height="15.4"><path fill="#41474e" d="M1600 736v192q0 40-28 68t-68 28h-416v416q0 40-28 68t-68 28h-192q-40 0-68-28t-28-68v-416h-416q-40 0-68-28t-28-68v-192q0-40 28-68t68-28h416v-416q0-40 28-68t68-28h192q40 0 68 28t28 68v416h416q40 0 68 28t28 68z"/></svg><span class="tx" style="font-size:16px;line-height:23.1px;letter-spacing:-0.327px;">Task7</span></th><td class="v"></td><td class="v"></td><td class="v"><span class="tx" style="font-size:16px;line-height:23.1px;letter-spacing:-0.334px;">1</span></td><td class="v"><span class="tx" style="font-size:16px;line-height:23.1px;letter-spacing:-0.334px;">0</span></td><td class="v"></td><td class="v"></td><td class="v"></td><td class="v"></td><td class="v"><span class="tx" style="font-size:16px;line-height:23.1px;letter-spacing:-0.334px;font-weight:700;">1</span></td><td class="v"><span class="tx" style="font-size:16px;line-height:23.1px;letter-spacing:-0.334px;font-weight:700;">0</span></td></tr>
<tr class="r13"><th class="rh l1"><svg class="pi" viewBox="192 -58 1408 1792" width="12.1" height="15.4"><path fill="#41474e" d="M1600 736v192q0 40-28 68t-68 28h-1216q-40 0-68-28t-28-68v-192q0-40 28-68t68-28h1216q40 0 68 28t28 68z"/></svg><span class="tx" style="font-size:16px;line-height:23.1px;letter-spacing:-0.308px;">Opel/Corsa/1-SYN-404</span></th><td class="v"></td><td class="v"></td><td class="v"><span class="tx" style="font-size:16px;line-height:23.1px;letter-spacing:-0.334px;">1</span></td><td class="v"><span class="tx" style="font-size:16px;line-height:23.1px;letter-spacing:-0.334px;">0</span></td><td class="v"></td><td class="v"></td><td class="v"></td><td class="v"></td><td class="v"><span class="tx" style="font-size:16px;line-height:23.1px;letter-spacing:-0.334px;font-weight:700;">1</span></td><td class="v"><span class="tx" style="font-size:16px;line-height:23.1px;letter-spacing:-0.334px;font-weight:700;">0</span></td></tr>
<tr class="r14"><th class="rh l2"><svg class="pi" viewBox="192 -58 1408 1792" width="12.1" height="15.4"><path fill="#41474e" d="M1600 736v192q0 40-28 68t-68 28h-416v416q0 40-28 68t-68 28h-192q-40 0-68-28t-28-68v-416h-416q-40 0-68-28t-28-68v-192q0-40 28-68t68-28h416v-416q0-40 28-68t68-28h192q40 0 68 28t28 68v416h416q40 0 68 28t28 68z"/></svg><span class="tx" style="font-size:16px;line-height:23.1px;letter-spacing:-0.327px;">Task8</span></th><td class="v"></td><td class="v"></td><td class="v"><span class="tx" style="font-size:16px;line-height:23.1px;letter-spacing:-0.334px;">1</span></td><td class="v"><span class="tx" style="font-size:16px;line-height:23.1px;letter-spacing:-0.334px;">0</span></td><td class="v"></td><td class="v"></td><td class="v"></td><td class="v"></td><td class="v"><span class="tx" style="font-size:16px;line-height:23.1px;letter-spacing:-0.334px;font-weight:700;">1</span></td><td class="v"><span class="tx" style="font-size:16px;line-height:23.1px;letter-spacing:-0.334px;font-weight:700;">0</span></td></tr>
</tbody></table>
<div class="tip"><div class="tip-arrow"></div><div class="tip-box"><span class="tx" style="font-size:10px;line-height:25.2px;letter-spacing:0.000px;">Title</span></div></div>
</div>
</body></html>
